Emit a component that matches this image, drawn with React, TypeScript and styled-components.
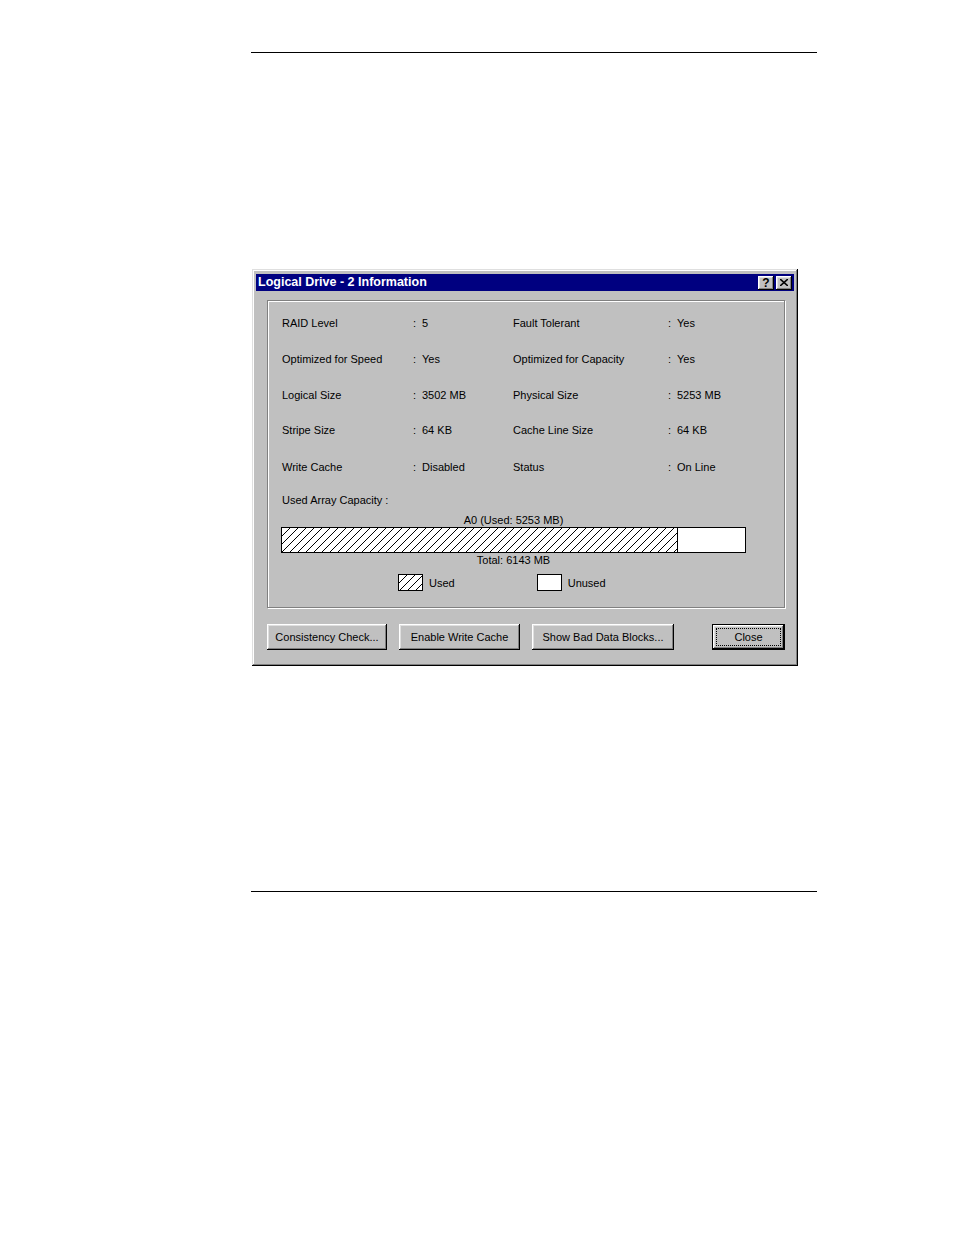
import React from 'react'
import styled, { createGlobalStyle } from 'styled-components'

const GlobalStyle = createGlobalStyle`
	html, body {
		margin: 0;
		padding: 0;
		background: #fff;
	}
	body {
		font-family: "Liberation Sans", Arial, sans-serif;
		font-size: 11px;
		color: #000;
	}
`

const Page = styled.div`
	width: 954px;
	height: 1235px;
	padding-top: 52px;
	box-sizing: border-box;
`
const Rule = styled.div<{ $top: number }>`
	margin: ${p => p.$top}px 0 0 251px;
	width: 566px;
	height: 1px;
	background: #000;
`
const Dialog = styled.div`
	margin: 216px 0 0 252px;
	width: 546px;
	height: 397px;
	box-sizing: border-box;
	padding: 5px 4px 4px 4px;
	background: #c0c0c0;
	box-shadow: inset -1px -1px #000, inset 1px 1px #dfdfdf, inset -2px -2px #808080, inset 2px 2px #fff;
`
const TitleBar = styled.div`
	display: flex;
	align-items: center;
	justify-content: space-between;
	height: 17px;
	padding: 0 2px 0 2px;
	background: #000080;
	color: #fff;
	font-weight: bold;
	font-size: 12.5px;
	line-height: 15px;
`
const CaptionButtons = styled.div`
	display: flex;
	gap: 2px;
`
const CaptionButton = styled.div`
	display: flex;
	align-items: center;
	justify-content: center;
	width: 16px;
	height: 14px;
	box-sizing: border-box;
	background: #c0c0c0;
	color: #000;
	box-shadow: inset -1px -1px #000, inset 1px 1px #fff, inset -2px -2px #808080, inset 2px 2px #dfdfdf;
	font-size: 12px;
	font-weight: bold;
	line-height: 14px;
`
const Body = styled.div`
	padding: 9px 0 0 11px;
`
const GroupBox = styled.div`
	width: 518px;
	height: 308px;
	box-sizing: border-box;
	border: 1px solid #808080;
	box-shadow: 1px 1px 0 #fff, inset 1px 1px 0 #fff;
	padding: 4px 0 0 14px;
`
const InfoGrid = styled.div`
	display: grid;
	grid-template-columns: 131px 9px 91px 155px 9px 1fr;
	grid-template-rows: 36px 36px 35px 36px 37px;
	align-items: center;
`
const Cell = styled.div`
	white-space: nowrap;
`
const CapacityLabel = styled.div`
	height: 28px;
	line-height: 30px;
`
const Capacity = styled.div`
	margin-left: -1px;
	width: 465px;
`
const Caption = styled.div`
	text-align: center;
	height: 14px;
	line-height: 14px;
`
const Bar = styled.div`
	display: flex;
	height: 26px;
	box-sizing: border-box;
	border: 1px solid #000;
	background: #fff;
`
const hatch = `
	background-color: #fff;
	background-image: linear-gradient(to bottom right, transparent calc(50% - 0.6px), #000 calc(50% - 0.6px), #000 calc(50% + 0.6px), transparent calc(50% + 0.6px));
	background-size: 8px 8px;
`
const UsedPart = styled.div<{ $width: number }>`
	width: ${p => p.$width}px;
	${hatch}
	border-right: 1px solid #000;
`
const Legend = styled.div`
	display: flex;
	gap: 82px;
	padding: 7px 0 0 116px;
`
const LegendItem = styled.div`
	display: flex;
	align-items: center;
	gap: 6px;
`
const Swatch = styled.div<{ $hatched?: boolean }>`
	width: 25px;
	height: 17px;
	box-sizing: border-box;
	border: 1px solid #000;
	background: #fff;
	${p => (p.$hatched ? hatch : '')}
`
const ButtonRow = styled.div`
	display: flex;
	align-items: center;
	padding: 16px 9px 0 11px;
`
const ButtonGroup = styled.div`
	display: flex;
	gap: 12px;
`
const Button = styled.div<{ $width: number; $default?: boolean }>`
	position: relative;
	display: flex;
	align-items: center;
	justify-content: center;
	width: ${p => p.$width}px;
	height: 26px;
	box-sizing: border-box;
	background: #c0c0c0;
	white-space: nowrap;
	box-shadow: ${p =>
		p.$default
			? 'inset 0 0 0 1px #000, inset -2px -2px #000, inset 2px 2px #fff, inset -3px -3px #808080, inset 3px 3px #dfdfdf'
			: 'inset -1px -1px #000, inset 1px 1px #fff, inset -2px -2px #808080, inset 2px 2px #dfdfdf'};
	margin-left: ${p => (p.$default ? 'auto' : '0')};
`
const FocusRing = styled.div`
	position: absolute;
	inset: 4px;
	border: 1px dotted #000;
`

const rows = [
	['RAID Level', '5', 'Fault Tolerant', 'Yes'],
	['Optimized for Speed', 'Yes', 'Optimized for Capacity', 'Yes'],
	['Logical Size', '3502 MB', 'Physical Size', '5253 MB'],
	['Stripe Size', '64 KB', 'Cache Line Size', '64 KB'],
	['Write Cache', 'Disabled', 'Status', 'On Line'],
]

const total = 6143
const used = 5253
const barInner = 463

export default function App() {
	return <>
		<GlobalStyle />
		<Page>
			<Rule $top={0} />
			<Dialog>
				<TitleBar>
					<span>Logical Drive - 2 Information</span>
					<CaptionButtons>
						<CaptionButton>?</CaptionButton>
						<CaptionButton>
							<svg width="8" height="7" viewBox="0 0 8 7">
								<path d="M0 0 L8 7 M8 0 L0 7" stroke="#000" strokeWidth="1.6" />
							</svg>
						</CaptionButton>
					</CaptionButtons>
				</TitleBar>
				<Body>
					<GroupBox>
						<InfoGrid>
							{rows.map(([l1, v1, l2, v2]) => <React.Fragment key={l1}>
								<Cell>{l1}</Cell>
								<Cell>:</Cell>
								<Cell>{v1}</Cell>
								<Cell>{l2}</Cell>
								<Cell>:</Cell>
								<Cell>{v2}</Cell>
							</React.Fragment>)}
						</InfoGrid>
						<CapacityLabel>Used Array Capacity :</CapacityLabel>
						<Capacity>
							<Caption>A0 (Used: 5253 MB)</Caption>
							<Bar>
								<UsedPart $width={Math.round(barInner * used / total) - 1} />
							</Bar>
							<Caption>Total: 6143 MB</Caption>
						</Capacity>
						<Legend>
							<LegendItem><Swatch $hatched />Used</LegendItem>
							<LegendItem><Swatch />Unused</LegendItem>
						</Legend>
					</GroupBox>
				</Body>
				<ButtonRow>
					<ButtonGroup>
						<Button $width={120}>Consistency Check...</Button>
						<Button $width={121}>Enable Write Cache</Button>
						<Button $width={142}>Show Bad Data Blocks...</Button>
					</ButtonGroup>
					<Button $width={73} $default>Close<FocusRing /></Button>
				</ButtonRow>
			</Dialog>
			<Rule $top={225} />
		</Page>
	</>
}
